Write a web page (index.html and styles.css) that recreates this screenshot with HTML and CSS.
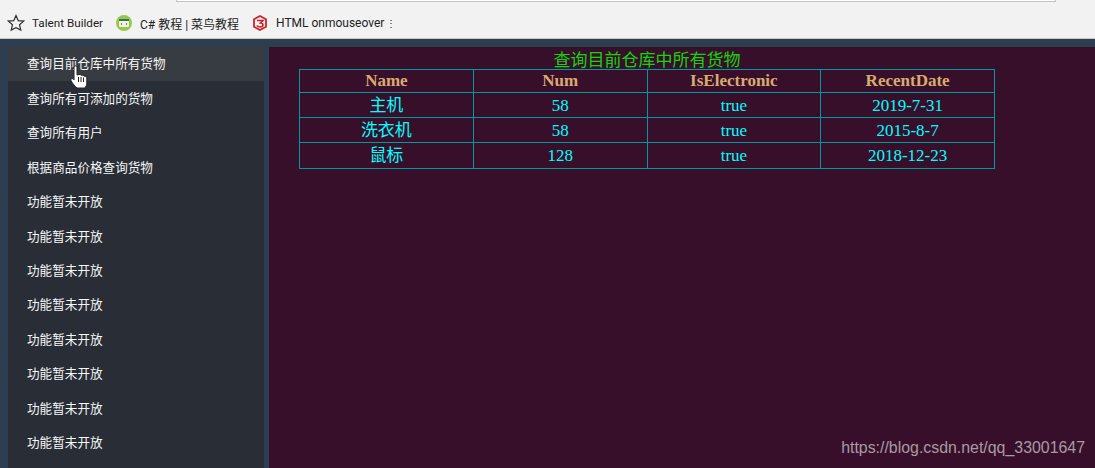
FILE: index.html
```html
<!DOCTYPE html>
<html lang="zh">
<head>
<meta charset="utf-8">
<title>货物查询</title>
<link rel="stylesheet" href="styles.css">
</head>
<body>
<header class="bookmarks">
  <div class="address"></div>
  <div class="bar">
    <svg class="star" width="18" height="18" viewBox="0 0 18 18"><path d="M9 1.500L11.200 6.600L16.700 7.100L12.500 10.700L13.800 16.100L9 13.700L4.200 16.100L5.500 10.700L1.300 7.100L6.800 6.600Z" fill="none" stroke="#333" stroke-width="1.200"/></svg>
    <span class="mark first">Talent Builder</span>
    <svg class="fav" width="16" height="16" viewBox="0 0 16 16"><circle cx="8" cy="8" r="8" fill="#96c84a"/><rect x="3" y="4" width="10" height="8" rx="1" fill="#eef3e2"/><rect x="3" y="4" width="10" height="2" fill="#3f6f56"/><path d="M6 8L5 9L6 10M10 8L11 9L10 10" stroke="#6d8a60" fill="none"/></svg>
    <span class="mark second">C# 教程 | 菜鸟教程</span>
    <svg class="fav" width="16" height="16" viewBox="0 0 16 16"><path d="M8 1L14 4.300V11.700L8 15L2 11.700V4.300Z" fill="none" stroke="#c9252b" stroke-width="1.800"/><path d="M5 5.500H11L8.500 8C10.500 8 11 9 11 9.800C11 11 9.800 12 8.200 12C6.800 12 5.500 11.300 5 10.300" fill="none" stroke="#c9252b" stroke-width="1.600"/></svg>
    <span class="mark third">HTML onmouseover</span>
    <span class="more">⋮</span>
  </div>
</header>
<div class="page">
  <nav class="side">
    <a class="item active">查询目前仓库中所有货物</a>
    <a class="item">查询所有可添加的货物</a>
    <a class="item">查询所有用户</a>
    <a class="item">根据商品价格查询货物</a>
    <a class="item">功能暂未开放</a>
    <a class="item">功能暂未开放</a>
    <a class="item">功能暂未开放</a>
    <a class="item">功能暂未开放</a>
    <a class="item">功能暂未开放</a>
    <a class="item">功能暂未开放</a>
    <a class="item">功能暂未开放</a>
    <a class="item">功能暂未开放</a>
  </nav>
  <main class="main">
    <div class="content">
      <h1 class="title">查询目前仓库中所有货物</h1>
      <table class="goods">
        <thead>
          <tr><th>Name</th><th>Num</th><th>IsElectronic</th><th>RecentDate</th></tr>
        </thead>
        <tbody>
          <tr><td>主机</td><td>58</td><td>true</td><td>2019-7-31</td></tr>
          <tr><td>洗衣机</td><td>58</td><td>true</td><td>2015-8-7</td></tr>
          <tr class="last"><td>鼠标</td><td>128</td><td>true</td><td>2018-12-23</td></tr>
        </tbody>
      </table>
    </div>
  </main>
</div>
<svg class="cursor" width="18" height="24" viewBox="0 0 18 24"><path d="M4 2C4 0.500 7 0.500 7 2V10L9 9.500C10 9.300 10.800 9.700 11 10.300L12.500 10.200C13.300 10.200 13.800 10.600 14 11.200C15.500 11 16.800 11.700 16.800 13V18C16.800 20 15.800 22 14.800 23H7C5 21 2.500 18.500 1 15.500C0.500 14.200 1.800 13 3 13.800L4 14.800Z" fill="#fff" stroke="#222" stroke-width="1"/><path d="M8.500 12V17M11 12V17M13.500 12.500V17" stroke="#222" stroke-width="1"/></svg>
<div class="watermark">https://blog.csdn.net/qq_33001647</div>
</body>
</html>
```
FILE: styles.css
```css
html, body {
  margin: 0;
  height: 468px;
  overflow: hidden;
}
body {
  position: relative;
  display: flex;
  flex-direction: column;
  background: #2c3e50;
}
.bookmarks {
  flex: none;
  height: 38px;
  background: #f2f2f2;
  border-bottom: 1px solid #c8c8c8;
  position: relative;
}
.address {
  position: absolute;
  left: 176px;
  top: 0;
  width: 878px;
  height: 1px;
  background: #fff;
  border: solid #c4c4c4;
  border-width: 0 1px 1px;
}
.bar {
  display: flex;
  align-items: center;
  height: 100%;
  padding: 8px 0 0 7px;
  box-sizing: border-box;
  font: 12px Roboto, "Noto Sans CJK SC", sans-serif;
  color: #222;
  white-space: nowrap;
}
.star { margin-right: 7px; flex: none; }
.fav { flex: none; }
.mark.first { width: 84px; flex: none; font-size: 11.700px; }
.mark.second { width: 112px; flex: none; margin-left: 8px; }
.mark.third { margin-left: 8px; width: 110px; flex: none; }
.more { font-size: 10px; }
.page {
  flex: 1;
  min-height: 0;
  display: flex;
  padding: 8px 0 0 8px;
  gap: 5px;
}
.side {
  flex: none;
  width: 256px;
  background: #282d36;
}
.item {
  display: flex;
  align-items: center;
  height: 34.450px;
  padding: 0 0 1px 19px;
  box-sizing: border-box;
  font: 12.600px/1 "Noto Sans CJK SC", sans-serif;
  color: #f7f7f7;
}
.item.active { background: #373b42; }
.main {
  flex: 1;
  background: #380f2b;
  padding: 0 100px 0 30px;
}
.content { width: 696px; }
.title {
  margin: 0;
  height: 22px;
  font: normal 17px/24px "Noto Sans CJK SC", sans-serif;
  color: #14d40a;
  text-align: center;
}
.goods {
  width: 696px;
  table-layout: fixed;
  border-collapse: collapse;
  font: 17px/20px "Liberation Serif", "Noto Sans CJK SC", serif;
  color: #0ff;
  text-align: center;
}
.goods th, .goods td {
  border: 1px solid #009a9a;
  padding: 0;
}
.goods th {
  height: 22px;
  color: #d8ab70;
}
.goods td {
  height: 23px;
  padding-top: 1px;
}
.goods .last td {
  height: 24px;
}
.cursor {
  position: absolute;
  left: 70px;
  top: 65px;
}
.watermark {
  position: absolute;
  right: 10px;
  top: 439px;
  font: 15.900px "Liberation Sans", sans-serif;
  color: #a89aa4;
}
```
